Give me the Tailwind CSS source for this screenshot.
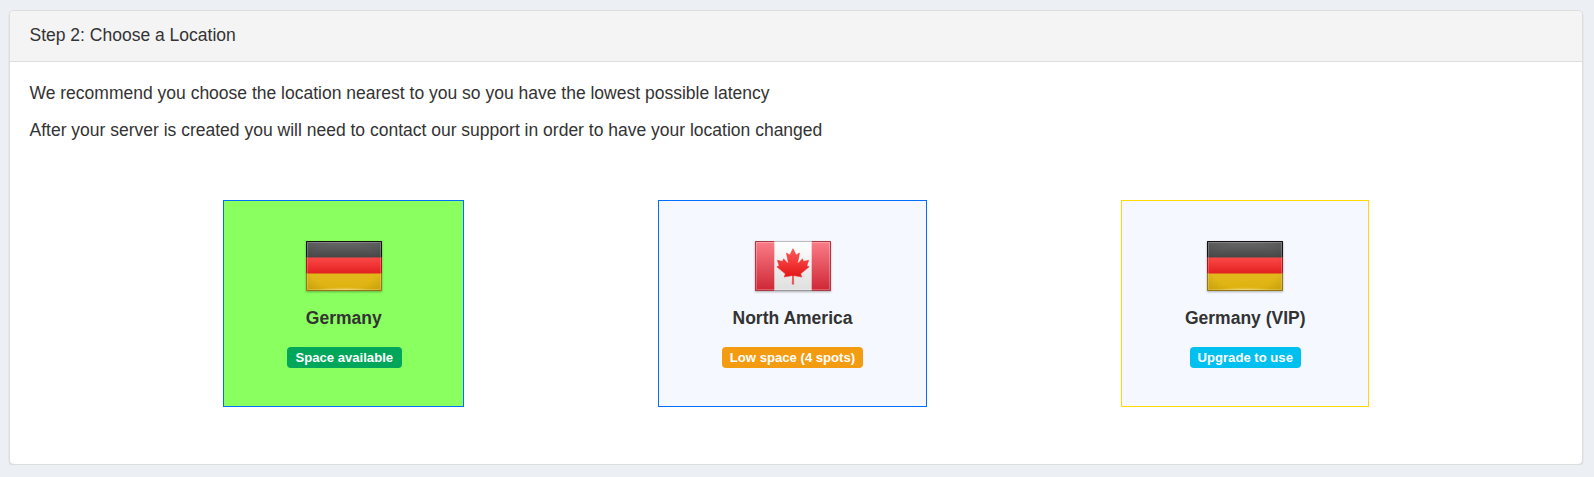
<!DOCTYPE html>
<html lang="en">
<head>
<meta charset="utf-8">
<title>Choose a Location</title>
<script src="https://cdn.jsdelivr.net/npm/@tailwindcss/browser@4"></script>
</head>
<body class="bg-[#ecf0f5] font-['Liberation_Sans',Arial,sans-serif] text-[17.5px] leading-[26px] text-[#333]">
<svg class="absolute size-0">
  <defs>
    <linearGradient id="black" x2="0" y2="1"><stop stop-color="#6a6a6a"/><stop offset="1" stop-color="#464646"/></linearGradient>
    <linearGradient id="red" x2="0" y2="1"><stop stop-color="#fc4848"/><stop offset="1" stop-color="#e01d1d"/></linearGradient>
    <linearGradient id="gold" x2="0" y2="1"><stop stop-color="#e2b71c"/><stop offset="1" stop-color="#ddb20c"/></linearGradient>
    <linearGradient id="band" x2="0" y2="1"><stop stop-color="#fb7e88"/><stop offset="1" stop-color="#cd2433"/></linearGradient>
    <linearGradient id="white" x2="0" y2="1"><stop stop-color="#fff"/><stop offset="1" stop-color="#dedede"/></linearGradient>
    <linearGradient id="leaf" x2="0" y2="1"><stop stop-color="#ff5a5a"/><stop offset=".75" stop-color="#e51a1a"/><stop offset="1" stop-color="#f05050"/></linearGradient>
    <radialGradient id="shade" r=".75"><stop offset=".6" stop-opacity="0"/><stop offset="1" stop-opacity=".15"/></radialGradient>
    <radialGradient id="glow" cx=".5" cy="1" r=".5"><stop stop-color="#fff" stop-opacity=".35"/><stop offset="1" stop-color="#fff" stop-opacity="0"/></radialGradient>
    <clipPath id="frame"><path d="M0 0h76v50H0z"/></clipPath>
    <symbol id="de" viewBox="0 0 76 51">
      <rect width="76" height="17" fill="url(#black)"/>
      <rect y="16.5" width="76" height="17" fill="url(#red)"/>
      <rect y="32.500" width="76" height="18" fill="url(#gold)"/>
      <rect width="76" height="51" fill="url(#shade)"/>
      <rect x="10" y="43" width="56" height="6" fill="url(#glow)"/>
      <rect x="1.5" y="1.5" width="73" height="47" fill="none" stroke="#fff" stroke-opacity=".2"/>
      <path d="M.5 16.500V.5h75v16" fill="none" stroke="#111"/>
      <path d="M.5 16.500v16M75.500 16.500v16" stroke="#b01515"/>
      <path d="M.5 32.500v17h75v-17" fill="none" stroke="#957612"/>
    </symbol>
    <symbol id="ca" viewBox="0 0 76 51">
      <rect width="76" height="51" fill="url(#white)"/>
      <rect width="19.300" height="51" fill="url(#band)"/>
      <rect x="56.700" width="19.300" height="51" fill="url(#band)"/>
      <path transform="translate(38 25.300) scale(.0087 .0088)" fill="url(#leaf)" stroke="#ee3333" stroke-width="60" d="m-90 2030 45-863a95 95 0 0 0-111-98l-859 151 116-320a65 65 0 0 0-20-73l-941-762 212-99a65 65 0 0 0 34-79l-186-572 542 115a65 65 0 0 0 73-38l105-247 423 454a65 65 0 0 0 111-57l-204-1052 327 189a65 65 0 0 0 91-27l332-652 332 652a65 65 0 0 0 91 27l327-189-204 1052a65 65 0 0 0 111 57l423-454 105 247a65 65 0 0 0 73 38l542-115-186 572a65 65 0 0 0 34 79l212 99-941 762a65 65 0 0 0-20 73l116 320-859-151a95 95 0 0 0-111 98l45 863z"/>
      <rect x="1.500" y="1.500" width="73" height="47" fill="none" stroke="#fff" stroke-opacity=".25"/>
      <path d="M19.300 .5h37.400" stroke="#bbb"/><path d="M19.300 49.500h37.400" stroke="#999"/>
      <path d="M19.300 .5H.5v49h18.800M56.700 .5h18.800v49H56.700" fill="none" stroke="#ac3842"/>
    </symbol>
  </defs>
</svg>
<main class="pt-[10px] pl-[9px] pr-[11px]">
  <section class="h-[455px] rounded-[5px] border border-[#ddd] bg-white shadow-[0_1px_2px_rgba(0,0,0,0.12)]">
    <header class="h-[51px] rounded-t-[4px] border-b border-[#ddd] bg-[#f4f4f4] px-[19.500px] pt-[11px]">Step 2: Choose a Location</header>
    <div class="px-[19.500px] pt-[18px]">
      <p>We recommend you choose the location nearest to you so you have the lowest possible latency</p>
      <p class="mt-[11px]">After your server is created you will need to contact our support in order to have your location changed</p>
      <div class="mt-[57px] flex justify-evenly">
        <article class="flex h-[207px] w-[241px] flex-col items-center border border-[#006eff] bg-[#8aff60] pt-[40px]">
          <svg class="h-[51px] w-[76px] shrink-0 drop-shadow-[0_1px_1px_rgba(0,0,0,0.3)]" viewBox="0 0 76 51"><use href="#de" width="76" height="51" clip-path="url(#frame)"/></svg>
          <h3 class="mt-[13px] font-bold">Germany</h3>
          <span class="mt-[16px] ml-[1px] h-[21px] rounded-[4px] bg-[#00a65a] px-[8.500px] text-[13.125px] leading-[21px] font-bold text-white">Space available</span>
        </article>
        <article class="flex h-[207px] w-[269px] flex-col items-center border border-[#006eff] bg-[#f5f9ff] pt-[40px]">
          <svg class="h-[51px] w-[76px] shrink-0 drop-shadow-[0_1px_1px_rgba(0,0,0,0.3)]" viewBox="0 0 76 51"><use href="#ca" width="76" height="51" clip-path="url(#frame)"/></svg>
          <h3 class="mt-[13px] font-bold">North America</h3>
          <span class="mt-[16px] h-[21px] rounded-[4px] bg-[#f39c12] px-[8px] text-[13.125px] leading-[21px] font-bold text-white">Low space (4 spots)</span>
        </article>
        <article class="flex h-[207px] w-[248px] flex-col items-center border border-[#ffd900] bg-[#f5f9ff] pt-[40px]">
          <svg class="h-[51px] w-[76px] shrink-0 drop-shadow-[0_1px_1px_rgba(0,0,0,0.3)]" viewBox="0 0 76 51"><use href="#de" width="76" height="51" clip-path="url(#frame)"/></svg>
          <h3 class="mt-[13px] ml-[1px] font-bold">Germany (VIP)</h3>
          <span class="mt-[16px] ml-[1px] h-[21px] rounded-[4px] bg-[#00c0ef] px-[8px] text-[13.125px] leading-[21px] font-bold text-white">Upgrade to use</span>
        </article>
      </div>
    </div>
  </section>
</main>
</body>
</html>
